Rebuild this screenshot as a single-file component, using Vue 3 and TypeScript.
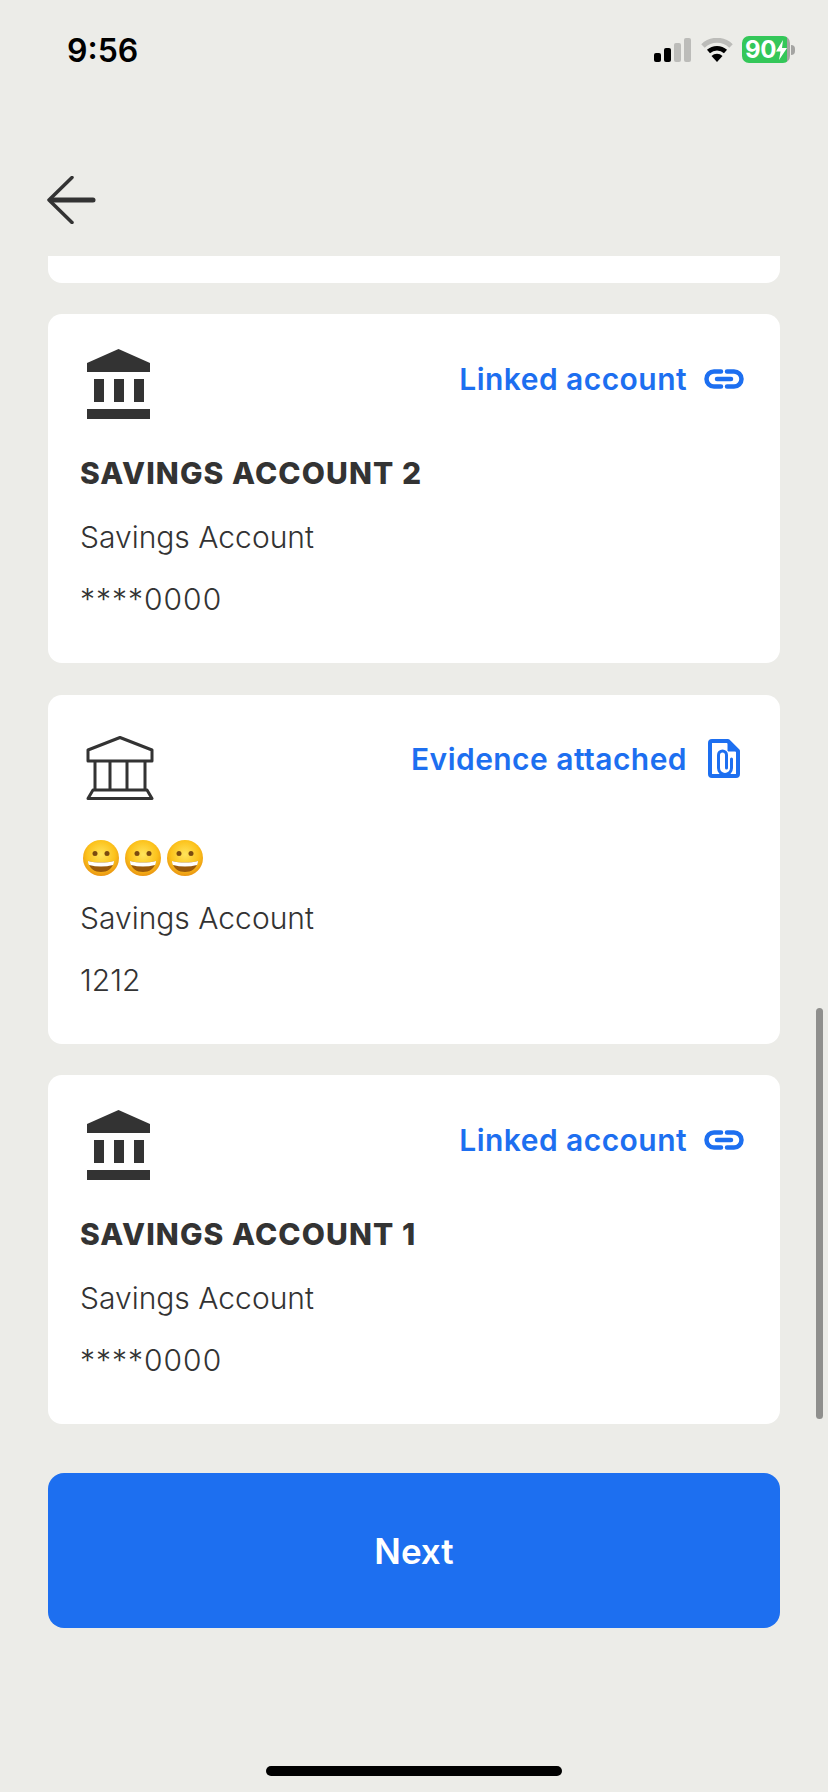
<template>
  <div class="screen">
    <div class="status">
      <span class="time">9:56</span>
      <div class="status-icons">
        <svg width="37" height="24" viewBox="0 0 37 24">
          <rect x="0" y="15" width="7" height="9" rx="2" fill="#000" />
          <rect x="10" y="10" width="7" height="14" rx="2" fill="#000" />
          <rect x="20" y="5" width="7" height="19" rx="2" fill="#bcbcb9" />
          <rect x="30" y="0" width="7" height="24" rx="2" fill="#bcbcb9" />
        </svg>
        <svg class="wifi" width="32" height="24" viewBox="0 0 32 24">
          <path d="M2 8a20 20 0 0 1 28 0" fill="none" stroke="#bcbcb9" stroke-width="5" />
          <path d="M7.500 13.500a12.500 12.500 0 0 1 17 0" fill="none" stroke="#000" stroke-width="4.500" />
          <path d="M16 24l-5.500-6a8 8 0 0 1 11 0z" fill="#000" />
        </svg>
        <div class="battery">
          <div class="battery-body">
            <span class="battery-text">90</span>
            <svg width="11" height="20" viewBox="0 0 11 20">
              <path d="M7 0L0 11.500h4.500L3 20l8-12H6z" fill="#fff" />
            </svg>
          </div>
          <div class="battery-nub"></div>
        </div>
      </div>
    </div>

    <div class="nav">
      <svg width="50" height="48" viewBox="0 0 50 48">
        <path d="M25 1.500L2 24l23 22.500" fill="none" stroke="#333" stroke-width="3.500" stroke-linecap="round" stroke-linejoin="round" />
        <path d="M6 24h40" fill="none" stroke="#333" stroke-width="5" stroke-linecap="round" />
      </svg>
    </div>

    <div class="list">
      <div class="card-cut"></div>

      <div v-for="acc in accounts" :key="acc.id" class="card">
        <div class="head">
          <svg v-if="acc.linked" width="64" height="70" viewBox="0 0 64 70" class="bank-solid">
            <path d="M0 14L31.500 0L63 14V23H0z" fill="#333" />
            <rect x="7" y="30" width="10" height="23" fill="#333" />
            <rect x="27" y="30" width="10" height="23" fill="#333" />
            <rect x="47" y="30" width="10" height="23" fill="#333" />
            <rect x="0" y="60" width="63" height="10" fill="#333" />
          </svg>
          <svg v-else width="68" height="64" viewBox="0 0 68 64" class="bank-outline">
            <path d="M2 25V14L34 1.500L66 14V25z" fill="none" stroke="#333" stroke-width="3" stroke-linejoin="round" />
            <path d="M9 25V54M24 25V54M41 25V54M59 25V54" fill="none" stroke="#333" stroke-width="3" />
            <path d="M7 54H61L66 62.500H2z" fill="none" stroke="#333" stroke-width="3" stroke-linejoin="round" />
          </svg>

          <div class="tag">
            <span>{{ acc.linked ? 'Linked account' : 'Evidence attached' }}</span>
            <svg v-if="acc.linked" width="40" height="40" viewBox="0 0 40 40">
              <g fill="none" stroke="#1d6ff0" stroke-width="4.500" stroke-linecap="round">
                <path d="M17 12.500H10a7.500 7.500 0 0 0 0 15h7" />
                <path d="M23 12.500h7a7.500 7.500 0 0 1 0 15h-7" />
                <path d="M13 20h14" />
              </g>
            </svg>
            <svg v-else width="40" height="40" viewBox="0 0 40 40">
              <path d="M8 2h16l10 10v23a2 2 0 0 1-2 2H8a2 2 0 0 1-2-2V4a2 2 0 0 1 2-2z" fill="none" stroke="#1d6ff0" stroke-width="4" stroke-linejoin="round" />
              <path d="M24 2v10h10z" fill="#1d6ff0" stroke="#1d6ff0" stroke-width="1" stroke-linejoin="round" />
              <path d="M27.500 20v9a6.500 6.500 0 0 1-13 0V16a4 4 0 0 1 8 0v13" fill="none" stroke="#1d6ff0" stroke-width="3" stroke-linecap="round" />
            </svg>
          </div>
        </div>

        <div v-if="acc.name" class="name">{{ acc.name }}</div>
        <div v-else class="name emojis">
          <svg v-for="n in 3" :key="n" width="36" height="36" viewBox="0 0 36 36">
            <defs>
              <radialGradient id="face" cx="50%" cy="40%" r="60%">
                <stop offset="0%" stop-color="#ffe45c" />
                <stop offset="65%" stop-color="#fcc21b" />
                <stop offset="100%" stop-color="#ea9512" />
              </radialGradient>
            </defs>
            <circle cx="18" cy="18" r="18" fill="url(#face)" />
            <circle cx="12" cy="13.500" r="2.500" fill="#7a4a10" />
            <circle cx="24" cy="13.500" r="2.500" fill="#7a4a10" />
            <path d="M5 21c8 2 18 2 26 0c-1 8-7 11-13 11S6 29 5 21z" fill="#9a5a0c" />
            <path d="M5 21c8 2 18 2 26 0c0 2-.5 3-1 4c-8 2-16 2-24 0c-.5-1-1-2-1-4z" fill="#fff" />
          </svg>
        </div>
        <div class="type">{{ acc.type }}</div>
        <div class="number" :class="{ masked: acc.linked }">{{ acc.number }}</div>
      </div>

      <div class="scrollbar"></div>
    </div>

    <button class="next">Next</button>
    <div class="home"></div>
  </div>
</template>

<script setup lang="ts">
interface Account {
  id: number
  name: string
  type: string
  number: string
  linked: boolean
}

const accounts: Account[] = [
  { id: 1, name: 'SAVINGS ACCOUNT 2', type: 'Savings Account', number: '****0000', linked: true },
  { id: 2, name: '', type: 'Savings Account', number: '1212', linked: false },
  { id: 3, name: 'SAVINGS ACCOUNT 1', type: 'Savings Account', number: '****0000', linked: true }
]
</script>

<style>
html,
body {
  margin: 0;
  background: #ecece8;
}
</style>

<style scoped>
.screen {
  width: 828px;
  height: 1792px;
  overflow: hidden;
  background: #ecece8;
  font-family: Inter, "Noto Sans", sans-serif;
  color: #333;
}

.status {
  height: 100px;
  box-sizing: border-box;
  padding: 32px 33px 0 67px;
  display: flex;
  justify-content: space-between;
  align-items: flex-start;
}

.time {
  font-size: 32px;
  line-height: 34px;
  margin-top: 2px;
  font-weight: 600;
  color: #000;
}

.status-icons {
  display: flex;
  align-items: center;
  padding-top: 4px;
}

.wifi {
  margin-left: 10px;
}

.battery {
  display: flex;
  align-items: center;
  margin-left: 9px;
}

.battery-body {
  width: 48px;
  height: 27px;
  box-sizing: border-box;
  border-radius: 7px;
  background: linear-gradient(90deg, #34c759 0 94%, #a4a4a2 94%);
  display: flex;
  align-items: center;
  justify-content: center;
  gap: 0;
}

.battery-text {
  font-size: 24px;
  font-weight: 700;
  color: #fff;
  line-height: 27px;
  letter-spacing: -0.5px;
}

.battery-nub {
  width: 4px;
  height: 10px;
  margin-left: 1px;
  border-radius: 0 4px 4px 0;
  background: #a4a4a2;
}

.nav {
  height: 156px;
  box-sizing: border-box;
  padding: 76px 0 0 47px;
}

.list {
  position: relative;
  height: 1217px;
  overflow: hidden;
  padding: 0 48px;
  display: flex;
  flex-direction: column;
  gap: 31.5px;
}

.card-cut {
  flex: none;
  height: 26.5px;
  background: #fff;
  border-radius: 0 0 14px 14px;
}

.card {
  flex: none;
  height: 349px;
  box-sizing: border-box;
  padding: 35px 36px 0 32px;
  background: #fff;
  border-radius: 14px;
}

.head {
  height: 70px;
  margin-bottom: 34px;
  display: flex;
  justify-content: space-between;
  align-items: flex-start;
}

.bank-solid {
  margin-left: 7px;
}

.bank-outline {
  margin: 6px 0 0 6px;
}

.tag {
  height: 59px;
  display: flex;
  align-items: center;
  gap: 17px;
  font-size: 30px;
  font-weight: 600;
  letter-spacing: 0.45px;
  color: #1d6ff0;
}

.name {
  height: 40px;
  line-height: 40px;
  font-size: 30px;
  font-weight: 800;
  letter-spacing: 1.1px;
  color: #333;
}

.emojis {
  display: flex;
  align-items: center;
  gap: 6px;
  box-sizing: border-box;
  padding-top: 8px;
  margin-left: 3px;
}

.type,
.number {
  height: 44px;
  line-height: 44px;
  font-size: 30px;
  font-weight: 300;
  color: #333;
}

.type {
  margin-top: 22px;
}

.number {
  margin-top: 18px;
}

.masked {
  letter-spacing: 1px;
}

.scrollbar {
  position: absolute;
  top: 752px;
  right: 5px;
  width: 7px;
  height: 411px;
  border-radius: 4px;
  background: #8f8f8d;
}

.next {
  display: block;
  width: 732px;
  height: 155px;
  margin: 0 48px;
  border: none;
  border-radius: 16px;
  background: #1d6ff0;
  color: #fff;
  font-family: inherit;
  font-size: 35px;
  font-weight: 600;
}

.home {
  width: 296px;
  height: 10px;
  margin: 138px auto 0;
  border-radius: 5px;
  background: #000;
}
</style>
